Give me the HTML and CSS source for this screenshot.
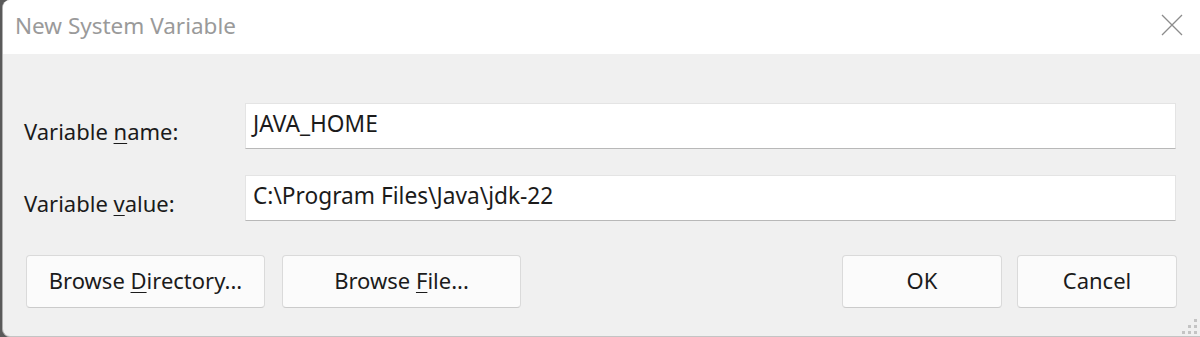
FILE: index.html
```html
<!DOCTYPE html>
<html>
<head>
<meta charset="utf-8">
<link rel="stylesheet" href="styles.css">
</head>
<body>
<div class="window">
  <div class="titlebar">
    <span class="title">New System Variable</span>
    <span class="close">
      <svg width="22" height="22" viewBox="0 0 22 22"><path d="M1 1 L21 21 M21 1 L1 21" stroke="#8c8c8c" stroke-width="1.3" fill="none"/></svg>
    </span>
  </div>
  <div class="content">
    <div class="field">
      <label class="label">Variable <u>n</u>ame:</label>
      <div class="input">JAVA_HOME</div>
    </div>
    <div class="field">
      <label class="label">Variable <u>v</u>alue:</label>
      <div class="input">C:\Program Files\Java\jdk-22</div>
    </div>
    <div class="buttons">
      <button class="btn btn-wide">Browse <u>D</u>irectory...</button>
      <button class="btn btn-wide">Browse <u>F</u>ile...</button>
      <span class="spacer"></span>
      <button class="btn btn-narrow">OK</button>
      <button class="btn btn-narrow">Cancel</button>
    </div>
    <div class="grip">
      <svg width="18" height="18" viewBox="0 0 18 18">
        <rect x="14" y="2" width="3" height="3" fill="#c4c4c4"/>
        <rect x="8" y="8" width="3" height="3" fill="#c4c4c4"/>
        <rect x="14" y="8" width="3" height="3" fill="#c4c4c4"/>
        <rect x="2" y="14" width="3" height="3" fill="#c4c4c4"/>
        <rect x="8" y="14" width="3" height="3" fill="#c4c4c4"/>
        <rect x="14" y="14" width="3" height="3" fill="#c4c4c4"/>
      </svg>
    </div>
  </div>
</div>
</body>
</html>
```

FILE: styles.css
```css
html, body {
  margin: 0;
  padding: 0;
  background: #5a5a5a;
  width: 1200px;
  height: 337px;
  overflow: hidden;
}

.window {
  margin-left: 2px;
  height: 336px;
  display: flex;
  flex-direction: column;
  border-left: 1px solid #b0b0b0;
  border-bottom: 1px solid #c4c4c4;
  border-radius: 8px 0 0 8px;
  overflow: hidden;
  background: #f0f0f0;
  font-family: "Noto Sans", "Open Sans", sans-serif;
  color: #1b1b1b;
}

.titlebar {
  height: 54px;
  flex: none;
  background: #ffffff;
  display: flex;
  align-items: center;
  padding-left: 12px;
  padding-right: 17px;
}

.title {
  font-size: 22.5px;
  color: #9a9a9a;
  flex: 1;
  margin-top: -3px;
}

.close {
  display: flex;
  margin-top: -4px;
}

.content {
  flex: 1;
  position: relative;
  padding: 49px 24px 0 21px;
  display: flex;
  flex-direction: column;
  gap: 26px;
}

.field {
  display: flex;
  align-items: center;
}

.label {
  width: 221px;
  flex: none;
  font-size: 22px;
  padding-top: 9px;
}

.label u,
.btn u {
  text-underline-offset: 3px;
  text-decoration-thickness: 1px;
}

.input {
  flex: 1;
  height: 46px;
  box-sizing: border-box;
  background: #ffffff;
  border: 1px solid #e4e4e4;
  border-bottom-color: #b8b8b8;
  font-size: 22.7px;
  line-height: 39px;
  padding-left: 7px;
}

.buttons {
  display: flex;
  margin: 8px -1px 0 2px;
}

.spacer {
  flex: 1;
}

.btn {
  height: 53px;
  box-sizing: border-box;
  background: #fbfbfb;
  border: 1px solid #dadada;
  border-bottom-color: #cbcbcb;
  border-radius: 4px;
  font-family: "Noto Sans", "Open Sans", sans-serif;
  font-size: 22px;
  color: #1b1b1b;
  padding: 0;
  padding-bottom: 3px;
}

.btn-wide {
  width: 239px;
  margin-right: 17px;
}

.btn-narrow {
  width: 160px;
  margin-left: 15px;
}

.grip {
  position: absolute;
  right: 2px;
  bottom: 1px;
  display: flex;
}
```
